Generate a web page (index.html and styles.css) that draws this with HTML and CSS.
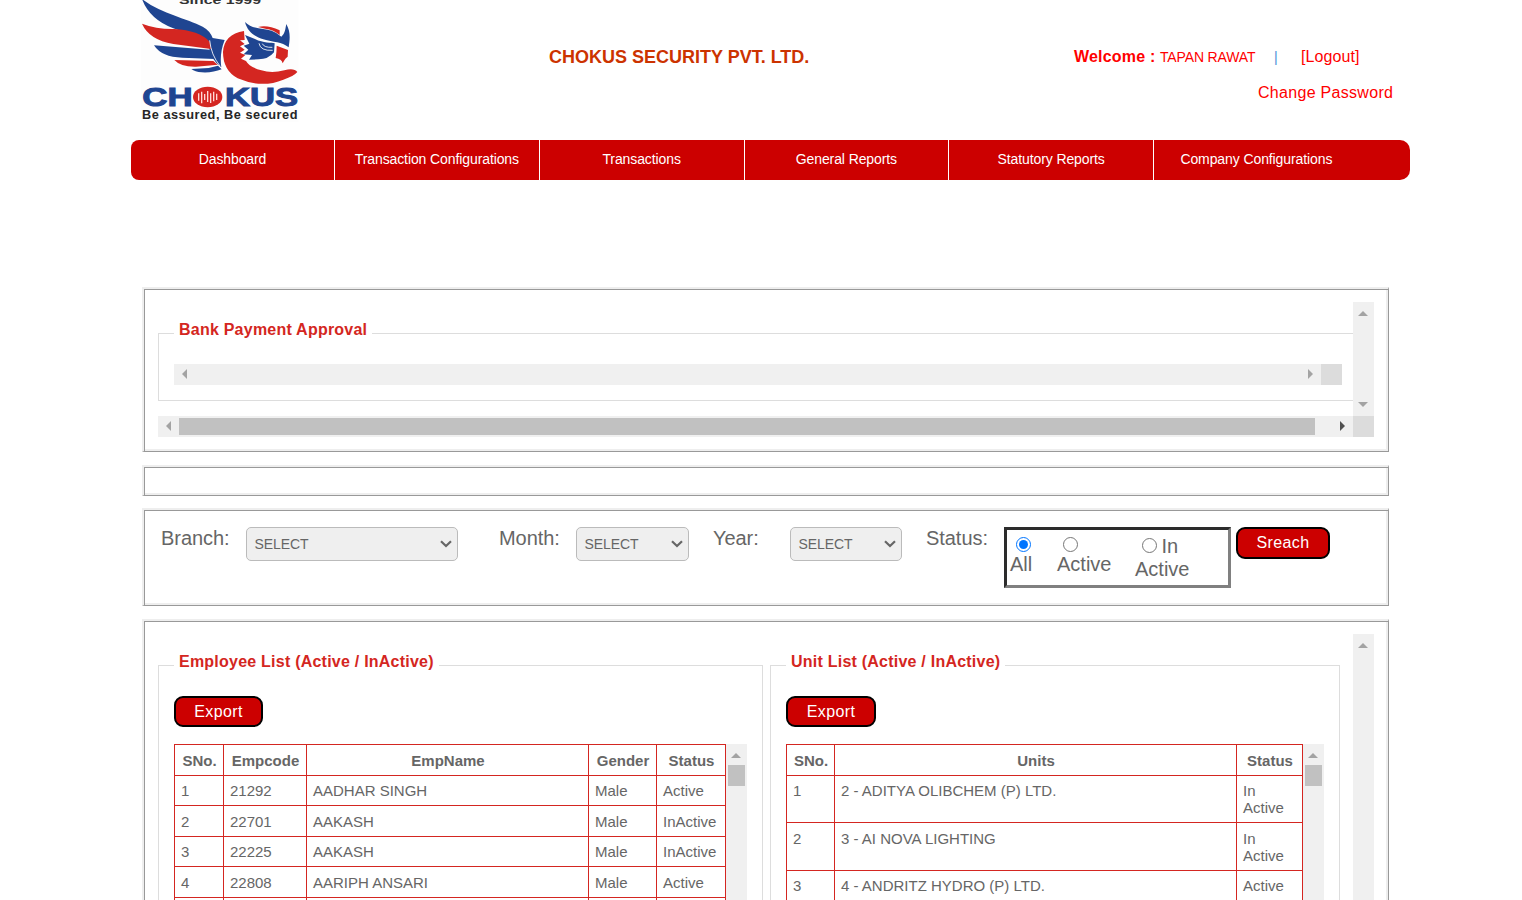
FILE: index.html
```html
<!DOCTYPE html>
<html lang="en">
<head>
<meta charset="utf-8">
<title>Chokus Security Pvt. Ltd.</title>
<link rel="stylesheet" href="styles.css">
</head>
<body>
<header class="header">
  <svg class="logo" viewBox="0 0 540 375" aria-label="Chokus">
    <rect x="33" y="0" width="472" height="366" fill="#fdfdfd"/>
    <text x="147" y="11" textLength="246" lengthAdjust="spacingAndGlyphs" font-size="32" font-weight="bold" fill="#333">Since 1999</text>
    <g fill="#1f4591">
      <path d="M36 -3C95 42 170 55 218 80Q240 92 248 114L284 120Q268 160 274 202Q240 176 236 137Q214 116 178 103L128 84Q58 57 36 -3Z"/>
      <path d="M72 136L239 149Q244 164 254 177L157 173Q95 172 72 136Z"/>
      <path d="M184 207L236 204L264 197L275 208Q248 219 215 217Q195 216 184 207Z"/>
    </g>
    <g fill="#d42621">
      <path d="M36 71Q80 88 133 87Q207 91 239 125L243 147L130 132Q57 119 36 71Z"/>
      <path d="M133 180L250 183L263 194L198 200Q152 201 133 180Z"/>
      <path d="M342 93Q282 103 279 156Q279 211 323 235Q395 266 460 239Q492 228 502 216Q492 203 463 211Q425 221 394 211Q358 201 348 183L333 176L346 165L330 158L344 149L330 139L344 132L330 121L344 120Z"/>
      <path d="M384 81Q411 73 449 91L449 105Q431 89 406 86Z"/>
      <path d="M440 137L474 150L473 170Q466 174 458 190Q455 177 437 174Q440 157 440 137Z"/>
    </g>
    <g fill="#1f4591">
      <path d="M345 66C365 88 400 84 425 92Q441 98 454 110C466 100 466 85 469 72C482 96 480 115 476 142C455 125 430 128 400 118C375 110 352 95 345 66Z"/>
      <path d="M345 105L375 117C400 130 425 127 434 130L432 157Q415 178 386 178L357 179L366 165L341 163L355 149L341 137L358 131Z"/>
    </g>
    <g fill="none" stroke="#fff" stroke-width="2.5">
      <path d="M387 130Q391 153 428 151M397 131Q402 143 427 142"/>
      <path d="M239 121Q243 164 270 198"/>
    </g>
    <g fill="#1f4591" font-size="77" font-weight="bold" stroke="#1f4591" stroke-width="3">
      <text x="37" y="317" textLength="151" lengthAdjust="spacingAndGlyphs">CH</text>
      <text x="285" y="317" textLength="219" lengthAdjust="spacingAndGlyphs">KUS</text>
    </g>
    <ellipse cx="233" cy="291" rx="44" ry="31" fill="#d42621"/>
    <path d="M206 280V302M215 275V310M224 282V300M233 273V306M242 280V309M251 275V304M260 281V300" stroke="#ffd9d5" stroke-width="4"/>
    <text x="36" y="358" textLength="468" lengthAdjust="spacingAndGlyphs" font-size="36" letter-spacing="1.5" font-weight="bold" fill="#252525">Be assured, Be secured</text>
  </svg>
  <h1 class="company">CHOKUS SECURITY PVT. LTD.</h1>
  <div class="account">
    <div class="account-row"><b>Welcome :</b><span class="user">TAPAN RAWAT</span><span class="bar">|</span><a class="logout">[Logout]</a></div>
    <a class="password">Change Password</a>
  </div>
</header>
<nav class="nav">
  <a>Dashboard</a><a>Transaction Configurations</a><a>Transactions</a><a>General Reports</a><a>Statutory Reports</a><a>Company Configurations</a>
</nav>
<main class="main">
  <section class="panel approval">
    <div class="approval-view">
      <div class="approval-content">
        <fieldset class="group bank">
          <legend>Bank Payment Approval</legend>
          <div class="hrow">
            <div class="hbar"><i class="arrow left"></i><i class="arrow right"></i></div>
            <div class="corner"></div>
          </div>
        </fieldset>
      </div>
      <div class="vbar"><i class="arrow up"></i><i class="arrow down"></i></div>
      <div class="hbar"><i class="arrow left"></i><div class="hthumb"></div><i class="arrow right dark"></i></div>
      <div class="corner"></div>
    </div>
  </section>
  <section class="panel blank"></section>
  <section class="panel filters">
    <label>Branch:</label>
    <div class="select branch">SELECT<svg viewBox="0 0 12 8"><path d="M1 1.2L6 6L11 1.2"/></svg></div>
    <label>Month:</label>
    <div class="select month">SELECT<svg viewBox="0 0 12 8"><path d="M1 1.2L6 6L11 1.2"/></svg></div>
    <label>Year:</label>
    <div class="select year">SELECT<svg viewBox="0 0 12 8"><path d="M1 1.2L6 6L11 1.2"/></svg></div>
    <label>Status:</label>
    <div class="radios">
      <label class="option"><input type="radio" name="status" checked><span>All</span></label>
      <label class="option"><input type="radio" name="status"><span>Active</span></label>
      <label class="option wide"><input type="radio" name="status"> In<br>Active</label>
    </div>
    <button class="btn search">Sreach</button>
  </section>
  <section class="panel lists">
    <fieldset class="group employees">
      <legend>Employee List (Active / InActive)</legend>
      <button class="btn">Export</button>
      <div class="table-view">
        <table class="grid">
          <colgroup><col class="e1"><col class="e2"><col class="e3"><col class="e4"><col class="e5"></colgroup>
          <tr class="tall"><th>SNo.</th><th>Empcode</th><th>EmpName</th><th>Gender</th><th>Status</th></tr>
          <tr><td>1</td><td>21292</td><td>AADHAR SINGH</td><td>Male</td><td>Active</td></tr>
          <tr class="tall"><td>2</td><td>22701</td><td>AAKASH</td><td>Male</td><td>InActive</td></tr>
          <tr><td>3</td><td>22225</td><td>AAKASH</td><td>Male</td><td>InActive</td></tr>
          <tr class="tall"><td>4</td><td>22808</td><td>AARIPH ANSARI</td><td>Male</td><td>Active</td></tr>
          <tr><td></td><td></td><td></td><td></td><td></td></tr>
        </table>
        <div class="vbar"><i class="arrow up"></i><div class="vthumb"></div></div>
      </div>
    </fieldset>
    <fieldset class="group units">
      <legend>Unit List (Active / InActive)</legend>
      <button class="btn unit-export">Export</button>
      <div class="table-view">
        <table class="grid">
          <colgroup><col class="u1"><col class="u2"><col class="u3"></colgroup>
          <tr class="tall"><th>SNo.</th><th>Units</th><th>Status</th></tr>
          <tr class="double"><td>1</td><td>2 - ADITYA OLIBCHEM (P) LTD.</td><td>In<br>Active</td></tr>
          <tr class="double more"><td>2</td><td>3 - AI NOVA LIGHTING</td><td>In<br>Active</td></tr>
          <tr class="last"><td>3</td><td>4 - ANDRITZ HYDRO (P) LTD.</td><td>Active</td></tr>
        </table>
        <div class="vbar"><i class="arrow up"></i><div class="vthumb"></div></div>
      </div>
    </fieldset>
    <div class="vbar lists-bar"><i class="arrow up"></i></div>
  </section>
</main>
</body>
</html>
```
FILE: styles.css
```css
* { box-sizing: border-box; }
body {
  display: flex;
  flex-direction: column;
  margin: 0;
  height: 900px;
  overflow: hidden;
  background: #fff;
  color: #666;
  font-family: "Liberation Sans", Arial, sans-serif;
}
.header { display: flex; flex: none; height: 140px; padding-left: 130px; }
.logo { width: 180px; height: 125px; flex: none; }
.company {
  margin: 47px 0 0 239px;
  width: 525px;
  font-size: 18px;
  line-height: 20px;
  color: #c30;
}
.account { width: 330px; padding-top: 47px; color: #f00; font-size: 16px; line-height: 20px; }
.account-row { display: flex; white-space: nowrap; }
.account-row b { width: 86px; letter-spacing: .2px; }
.user { width: 114px; font-size: 14px; line-height: 20px; letter-spacing: -.15px; }
.bar { width: 27px; color: #4a90d9; font-size: 14px; line-height: 20px; }
.logout { letter-spacing: .1px; }
.password { display: block; margin: 16px 0 0 184px; letter-spacing: .3px; white-space: nowrap; }

.nav {
  display: flex;
  flex: none;
  width: 1279px;
  height: 40px;
  margin-left: 131px;
  border-radius: 8px 10px 10px 8px;
  background: #c00;
}
.nav a {
  width: 204.75px;
  border-right: 1px solid #fff;
  color: #fff;
  font-size: 14px;
  line-height: 39px;
  letter-spacing: -.1px;
  text-align: center;
}
.nav a:first-child { width: 204px; }
.nav a:last-child { border-right: 0; }

.main { display: flex; flex: 1; min-height: 0; flex-direction: column; gap: 13px; margin: 107px 0 0 142px; width: 1247px; overflow: hidden; }
.panel {
  flex: none;
  border-style: solid;
  border-width: 2px 1px 1px 2px;
  border-color: #eee #999 #999 #eee;
  box-shadow: inset 1px 1px #999, inset -2px -2px #eee;
}
.approval { height: 165px; padding: 13px 14px; }
.blank { height: 31px; }
.approval-view { display: grid; grid-template: 114px 21px / 1195px 21px; }
.approval-content { overflow: hidden; padding-top: 18px; }
.group { min-width: 0; margin: 0; border: 1px solid #ddd; padding: 0 15px; }
legend { padding: 0 5px 6px; font-size: 16px; font-weight: bold; line-height: 20px; color: #d42621; letter-spacing: .23px; }
.bank { width: 1215px; height: 81px; padding-top: 18px; }
.hrow { display: flex; }
.hbar { display: flex; align-items: center; justify-content: space-between; height: 21px; background: #f0f0f0; padding: 0 8px; }
.hrow .hbar { width: 1147px; }
.corner { width: 21px; height: 21px; background: #dcdcdc; }
.vbar { display: flex; flex-direction: column; align-items: center; justify-content: space-between; width: 21px; padding: 9px 0; background: #f0f0f0; }
.hthumb { width: 1136px; height: 17px; margin-right: auto; margin-left: 8px; background: #c1c1c1; }
.arrow { width: 0; height: 0; border: 0 solid transparent; flex: none; }
.up, .down { margin-right: 1px; }
.left, .right { margin-bottom: 1px; }
.up { border-width: 0 5px 5px; border-bottom-color: #a3a3a3; }
.down { border-width: 5px 5px 0; border-top-color: #a3a3a3; }
.left { border-width: 5px 5px 5px 0; border-right-color: #a3a3a3; }
.right { border-width: 5px 0 5px 5px; border-left-color: #a3a3a3; }
.dark { border-left-color: #505050; }

.filters {
  display: grid;
  grid-template-columns: 85px 253px 77px 137px 77px 136px 78px 232px 94px;
  align-items: start;
  height: 98px;
  margin-top: -1px;
  padding: 17px 0 0 17px;
  font-size: 20px;
}
.filters > label { line-height: 22px; letter-spacing: -.05px; }
.select {
  display: flex;
  align-items: center;
  justify-content: space-between;
  height: 34px;
  padding: 0 5px 0 7.5px;
  border: 1px solid #bbb;
  border-radius: 5px;
  background: #efefef;
  font-size: 14px;
  letter-spacing: -.1px;
}
.select svg { width: 12px; height: 8px; fill: none; stroke: #666; stroke-width: 2.2; }
.branch { width: 212px; }
.month { width: 113px; }
.year { width: 112px; }
.radios {
  display: flex;
  width: 227px;
  height: 61px;
  padding: 7px 0 0 3px;
  border: 3px solid;
  border-color: #2c2c2c #808080 #808080 #2c2c2c;
}
.option { width: 47px; line-height: 23px; }
.option input { display: block; width: 15px; height: 15px; margin: 0 0 1px 6px; }
.option span { display: block; line-height: 23px; }
.option + .option { width: 78px; }
.option.wide { margin-top: -2px; }
.option.wide input { display: inline-block; margin: 0 -1px 0 7px; vertical-align: 0; }
.btn {
  display: block;
  width: 89px;
  height: 31px;
  padding: 0;
  border: 2px solid #000;
  border-radius: 9px;
  background: #c00;
  color: #fff;
  font: 16px/26px "Liberation Sans", Arial, sans-serif;
  letter-spacing: .4px;
}
.search { width: 94px; height: 32px; }
.unit-export { width: 90px; }

.lists { display: flex; height: 281px; padding: 13px 14px 0; border-bottom: 0; box-shadow: inset 1px 1px #999, inset -2px 0 #eee; overflow: hidden; }
.lists .group { margin-top: 18px; height: 248px; padding-top: 18px; border-bottom: 0; }
.employees { width: 605px; }
.lists .units { width: 570px; margin-left: 7px; }
.lists-bar { margin-left: 13px; }
.table-view { display: flex; margin-top: 17px; height: 156px; overflow: hidden; }
.grid { align-self: flex-start; table-layout: fixed; border-spacing: 0; border-right: 1px solid #d42621; font-size: 15px; line-height: 17px; }
.employees .grid { width: 552px; }
.units .grid { width: 517px; }
.e1 { width: 49px; } .e2 { width: 83px; } .e3 { width: 282px; } .e4 { width: 68px; } .e5 { width: 69px; }
.u1 { width: 48px; } .u2 { width: 402px; } .u3 { width: 66px; }
.grid tr { height: 30px; }
.grid .tall { height: 31px; }
.grid .double { height: 47px; }
.grid .more { height: 48px; }
.grid th, .grid td { border: solid #d42621; border-width: 1px 0 0 1px; padding: 6px 6px 0; vertical-align: top; text-align: left; white-space: nowrap; }
.grid .tall td, .grid .more td { padding-top: 7px; }
.grid th { padding: 7px 0 0 1px; text-align: center; }
.table-view .vbar { justify-content: flex-start; }
.vthumb { flex: none; width: 17px; height: 21px; margin-top: 7px; background: #c1c1c1; }
```
